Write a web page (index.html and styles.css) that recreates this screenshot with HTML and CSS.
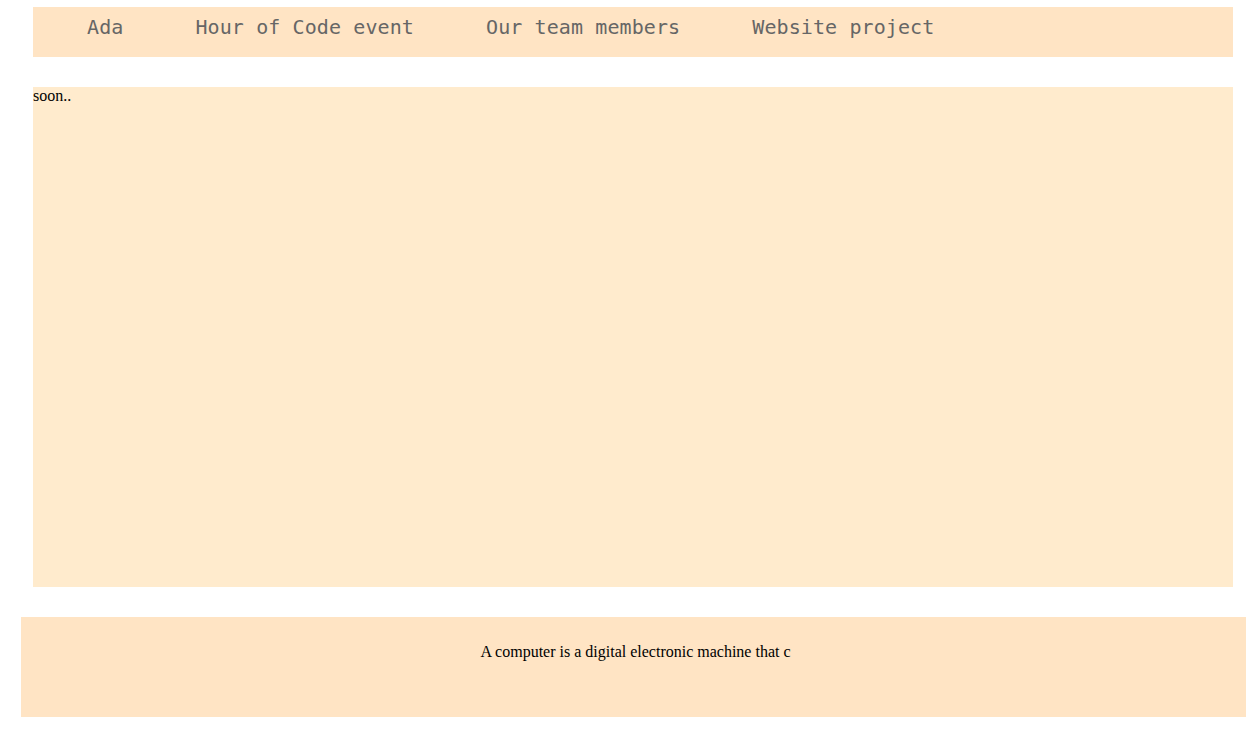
FILE: index.html
```html
<!DOCTYPE html>
<html>
<head>
<meta charset="utf-8">
<title>Ada</title>
<link rel="stylesheet" href="styles.css">
</head>
<body>
<header class="topbar">
  <nav class="nav">
    <a class="nav-link" href="#">Ada</a>
    <a class="nav-link" href="#">Hour of Code event</a>
    <a class="nav-link" href="#">Our team members</a>
    <a class="nav-link" href="#">Website project</a>
  </nav>
</header>
<main class="content">soon..</main>
<footer class="footer">
  <p class="footer-text">A computer is a digital electronic machine that c</p>
</footer>
</body>
</html>
```
FILE: styles.css
```css
html, body {
  margin: 0;
  padding: 0;
  background: #fff;
}
body {
  font-family: "Liberation Serif", "Times New Roman", serif;
  font-size: 16px;
  color: #000;
  padding-top: 7px;
}
.topbar {
  margin-left: 33px;
  width: 1200px;
  height: 50px;
  background: #ffe4c4;
  box-sizing: border-box;
  padding-left: 18px;
}
.nav {
  display: flex;
  height: 40px;
  align-items: center;
}
.nav-link {
  font-family: "DejaVu Sans Mono", monospace;
  font-size: 20px;
  letter-spacing: 0.1px;
  line-height: 40px;
  color: #666;
  text-decoration: none;
  padding: 0 36px;
}
.content {
  display: block;
  margin-top: 30px;
  margin-left: 33px;
  width: 1200px;
  height: 500px;
  background: #ffebcd;
}
.footer {
  margin-top: 30px;
  margin-left: 21px;
  width: 1225px;
  height: 100px;
  background: #ffe4c4;
  box-sizing: border-box;
  padding-top: 10px;
  text-align: center;
}
.footer-text {
  margin: 16px 0 0;
  padding-left: 4px;
}
```
